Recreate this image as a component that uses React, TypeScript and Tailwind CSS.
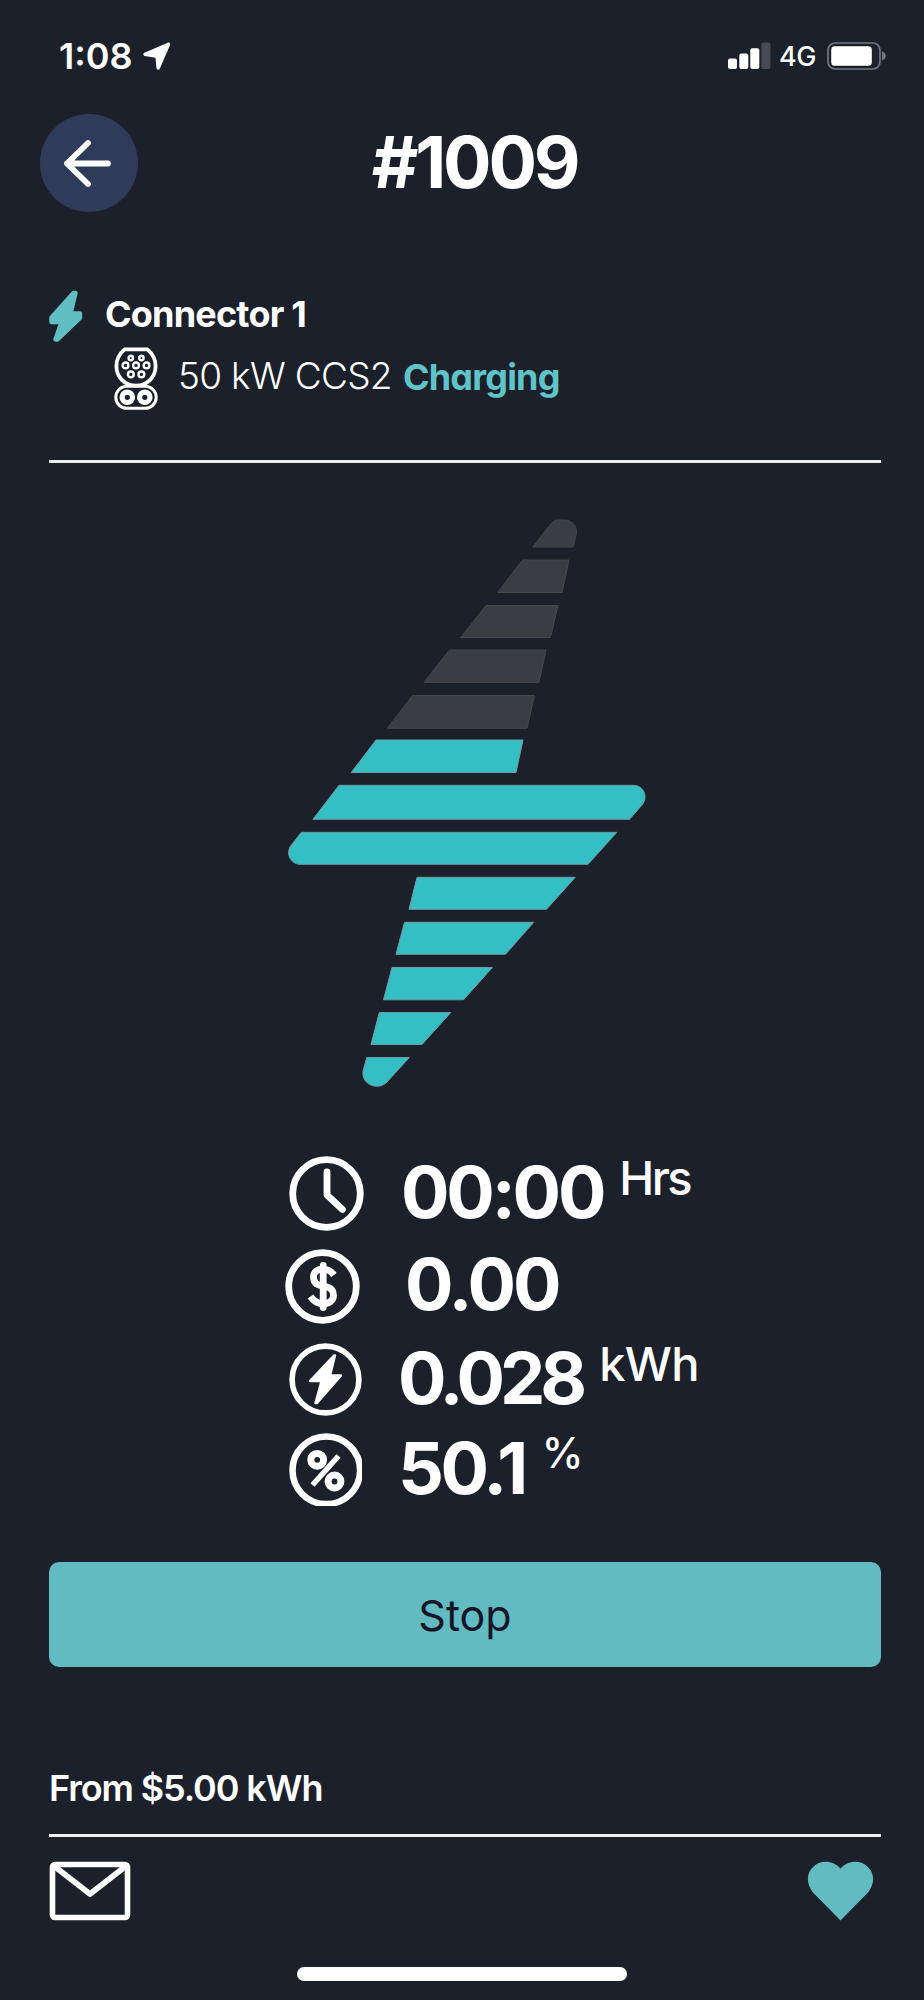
import type { ReactNode } from "react";

function LocationArrow() {
  return (
    <svg width="30" height="30" viewBox="0 0 30 30" className="ml-[9px]">
      <path d="M3 13.3 26.5 3.2 16.2 27 15 15.2Z" fill="#fff" stroke="#fff" strokeWidth="3.4" strokeLinejoin="round" />
    </svg>
  );
}

function Signal() {
  return (
    <svg width="43" height="28" viewBox="0 0 43 28">
      <rect x="0" y="16.5" width="9" height="10.5" rx="2" fill="#fff" />
      <rect x="11.3" y="11.5" width="9" height="15.5" rx="2" fill="#fff" />
      <rect x="22.3" y="6.2" width="9" height="20.8" rx="2" fill="#fff" />
      <rect x="33.4" y="0.5" width="9" height="26.5" rx="2" fill="#484a54" />
    </svg>
  );
}

function Battery() {
  return (
    <svg width="60" height="30" viewBox="0 0 60 30">
      <rect x="1" y="2" width="52" height="26" rx="7" fill="none" stroke="#747781" strokeWidth="1.7" />
      <rect x="4.2" y="5.3" width="40.6" height="19.4" rx="3.5" fill="#fff" />
      <path d="M55 10.3c5 1.8 5 7.6 0 9.4Z" fill="#747781" />
    </svg>
  );
}

function BackArrow() {
  return (
    <svg width="98" height="98" viewBox="0 0 98 98">
      <path d="M48 29 27 49.5 48 70M27 49.5H68" fill="none" stroke="#fff" strokeWidth="5.8" strokeLinecap="round" strokeLinejoin="round" />
    </svg>
  );
}

function SmallBolt() {
  return (
    <svg width="34" height="54" viewBox="0 0 34 54">
      <path d="M24.500 4 2.500 28.500v4.500H12.500L6.500 50.500H8.500L31 29v-4.500H21.500L26.500 4Z" fill="#61bec3" stroke="#61bec3" strokeWidth="4.400" strokeLinejoin="round" />
    </svg>
  );
}

function Ccs2Icon() {
  const pins = [
    [16.8, 11, 2.2], [27.4, 11, 2.2],
    [11.5, 18.4, 2.9], [22, 18.4, 2.9], [32.5, 18.4, 2.9],
    [16.8, 27.4, 2.9], [27.4, 27.4, 2.9],
  ];
  return (
    <svg width="44" height="64" viewBox="0 0 44 64">
      <path d="M10.5 2.4H33.5C38.200 6.500 41.600 12 41.600 19 41.600 29.800 33.500 38.700 22 38.700S2.400 29.800 2.400 19C2.400 12 5.800 6.500 10.500 2.400Z" fill="none" stroke="#fff" strokeWidth="3.800" strokeLinejoin="round" />
      <rect x="1.800" y="39.300" width="40.400" height="22" rx="11" fill="#1c202b" stroke="#fff" strokeWidth="3" />
      {pins.map(([x, y, r]) => (
        <circle key={x + "-" + y} cx={x} cy={y} r={r} fill="none" stroke="#fff" strokeWidth="2.400" />
      ))}
      <circle cx="13.300" cy="50.300" r="5.200" fill="none" stroke="#fff" strokeWidth="5.200" />
      <circle cx="30.800" cy="50.300" r="5.200" fill="none" stroke="#fff" strokeWidth="5.200" />
    </svg>
  );
}

function ChargeBolt() {
  const empty = [
    "M245 28H285L288.500 14.500C289 6 283 1 277 1H270.500C267 1 264 3 261.500 6.500Z",
    "M234.500 41H281L274 73.500H209.500Z",
    "M198 86.500H270L262.500 118.500H172.800Z",
    "M161.500 131H258L251 163.300H136Z",
    "M124.500 176.500H246.500L239 209.300H99.500Z",
  ];
  const full = [
    "M88 221H235L228 253.500H63.300Z",
    "M51 266.300H346C356 267 360.500 278 354 286L341.500 300.300H25Z",
    "M13.300 313.300H328.800L300 345.300H11C3 344.300 -2 336 2 328Z",
    "M129 358.300H287.200L258.500 390.300H121Z",
    "M116.500 403.300H245.700L217.500 435.300H108Z",
    "M104 448.500H204.300L175.500 480.800H95.500Z",
    "M91.300 493.500H162.800L134 525.500H83Z",
    "M78.800 538.500H121.300L99 563C91 571.500 73.500 567 75 552Z",
  ];
  return (
    <svg width="362" height="574" viewBox="-2 -2 362 574">
      <g fill="#3b3d45" stroke="#45474f" strokeWidth="1" strokeLinejoin="round">
        {empty.map((d) => <path key={d} d={d} />)}
      </g>
      <g fill="#34bfc4" stroke="#6f9da3" strokeWidth="1" strokeLinejoin="round">
        {full.map((d) => <path key={d} d={d} />)}
      </g>
    </svg>
  );
}

function Ring({ children, size, stroke }: { children: ReactNode; size: number; stroke: number }) {
  return (
    <svg width={size} height={size} viewBox={`${-size / 2} ${-size / 2} ${size} ${size}`}>
      <circle r={size / 2 - stroke / 2 - 0.3} fill="none" stroke="#fff" strokeWidth={stroke} />
      {children}
    </svg>
  );
}

function ClockIcon() {
  return (
    <Ring size={75} stroke={6.8}>
      <path d="M.5-21.500V1.500L16 16" fill="none" stroke="#fff" strokeWidth="6.800" strokeLinecap="round" strokeLinejoin="round" />
    </Ring>
  );
}

function DollarIcon() {
  return (
    <Ring size={75} stroke={6.8}>
      <path d="M11.500-11.500C8-16 4-17.300 0-17.300-5.500-17.300-9-14-9-10-9 .5-.5-1.500 5.500.7 9.500 2 11 5 11 9 11 14 6.500 17.300 1 17.300-4.500 17.300-9 14.500-12 10" fill="none" stroke="#fff" strokeWidth="6.800" />
      <path d="M.7-21V21" stroke="#fff" strokeWidth="6.800" strokeLinecap="round" />
    </Ring>
  );
}

function EnergyIcon() {
  return (
    <Ring size={73} stroke={5.6}>
      <path d="M8.500-24-15.500 1.500H-4L-10 23.500H-8.500L15.500-4H4.500L9.500-24Z" fill="#fff" stroke="#fff" strokeWidth="2.400" strokeLinejoin="round" />
    </Ring>
  );
}

function PercentIcon() {
  return (
    <svg width="73" height="73" viewBox="-36.5 -36.5 73 73">
      <circle cx="0.8" cy="0.8" r="33.800" fill="none" stroke="#fff" strokeWidth="6.500" />
      <circle cx="-8.300" cy="-9.700" r="6.400" fill="none" stroke="#fff" strokeWidth="7" />
      <circle cx="9" cy="12" r="6.400" fill="none" stroke="#fff" strokeWidth="7" />
      <path d="M13-13.500-13 15.500" stroke="#fff" strokeWidth="5.500" />
    </svg>
  );
}

function MailIcon() {
  return (
    <svg width="82" height="60" viewBox="0 0 82 60">
      <rect x="3.500" y="3.500" width="75" height="53" rx="2.500" fill="none" stroke="#fff" strokeWidth="5.600" />
      <path d="M5 5 41 33 77 5" fill="none" stroke="#fff" strokeWidth="5.800" strokeLinejoin="round" />
    </svg>
  );
}

function HeartIcon() {
  return (
    <svg width="67" height="60" viewBox="0 0 67 60">
      <path d="M33.500 59.500 5.500 31C-6 15 6 .8 18.500 .8c6 0 11 2.200 15 6.800 4-4.600 9-6.800 15-6.800C61 .8 73 15 61.500 31Z" fill="#61bbc0" />
    </svg>
  );
}

export default function App() {
  return (
    <main className="flex h-[2000px] w-[924px] flex-col overflow-hidden bg-[#1c202b] font-['Inter',sans-serif] leading-none text-white [font-feature-settings:'cv11','ss03']">
      <div className="flex h-[112px] items-center justify-between pr-[37px] pl-[59px]">
        <div className="flex items-center">
          <span className="text-[36px] font-semibold">1:08</span>
          <LocationArrow />
        </div>
        <div className="flex items-center">
          <Signal />
          <span className="ml-[8px] text-[27px] font-medium tracking-[-0.5px]">4G</span>
          <span className="ml-[11px]"><Battery /></span>
        </div>
      </div>

      <header className="grid h-[101px] grid-cols-[98px_1fr_98px] items-center px-[40px]">
        <button aria-label="Back" className="size-[98px] rounded-full bg-[#303b59]"><BackArrow /></button>
        <h1 className="ml-[25px] pb-[2px] text-center text-[72px] font-bold tracking-[-3.2px]">#1009</h1>
      </header>

      <section className="mr-[43px] ml-[49px] h-[250px] border-b-[3px] border-[#eceeed] pt-[76px]">
        <div className="flex h-[54px] items-center">
          <SmallBolt />
          <h2 className="ml-[22px] pb-[4px] text-[36px] font-bold tracking-[-0.8px]">Connector 1</h2>
        </div>
        <div className="mt-[4px] flex h-[64px] items-center pl-[65px]">
          <Ccs2Icon />
          <span className="ml-[20px] pb-[8px] text-[37px] font-light tracking-[-0.7px]">50 kW CCS2</span>
          <span className="ml-[11px] pb-[5px] text-[36px] font-bold tracking-[-0.8px] text-[#5fc4c8]">Charging</span>
        </div>
      </section>

      <section className="flex h-[685px] pt-[54px] pl-[286px]">
        <ChargeBolt />
      </section>

      <section className="flex h-[414px] flex-col pl-[285px]">
        <div className="flex h-[91px] items-center pl-[4px]">
          <ClockIcon />
          <span className="ml-[37px] pb-[4px] text-[72px] font-bold tracking-[-3.2px]">00:00</span>
          <span className="ml-[16px] pb-[33px] text-[47px] font-medium tracking-[-2.6px]">Hrs</span>
        </div>
        <div className="flex h-[94px] items-center">
          <DollarIcon />
          <span className="ml-[45px] pb-[4px] text-[72px] font-bold tracking-[-3px]">0.00</span>
        </div>
        <div className="flex h-[92px] items-center pl-[4px]">
          <EnergyIcon />
          <span className="ml-[36px] pb-[2px] text-[72px] font-bold tracking-[-5px]">0.028</span>
          <span className="ml-[17px] pb-[31px] text-[47px] font-medium tracking-[-0.6px]">kWh</span>
        </div>
        <div className="flex h-[88px] items-center pl-[4px]">
          <PercentIcon />
          <span className="ml-[36px] pb-[2px] text-[72px] font-bold tracking-[-3.6px]">50.1</span>
          <span className="ml-[17px] pb-[32px] text-[42px] font-medium">%</span>
        </div>
      </section>

      <button className="mr-[43px] ml-[49px] h-[105px] shrink-0 rounded-[10px] bg-[#61bbc0] pt-[2px] text-[43px] text-[#151528]">Stop</button>

      <footer className="flex flex-1 flex-col pr-[43px] pl-[49px]">
        <p className="flex h-[167px] items-end pb-[28px] text-[36px] font-semibold tracking-[-1.1px]">From $5.00 kWh</p>
        <div className="h-[3px] bg-[#f3eef4]" />
        <div className="flex items-center justify-between pt-[24px] pr-[7px]">
          <MailIcon />
          <HeartIcon />
        </div>
        <div className="mt-[46px] ml-[248px] h-[14px] w-[330px] rounded-full bg-white" />
      </footer>
    </main>
  );
}
